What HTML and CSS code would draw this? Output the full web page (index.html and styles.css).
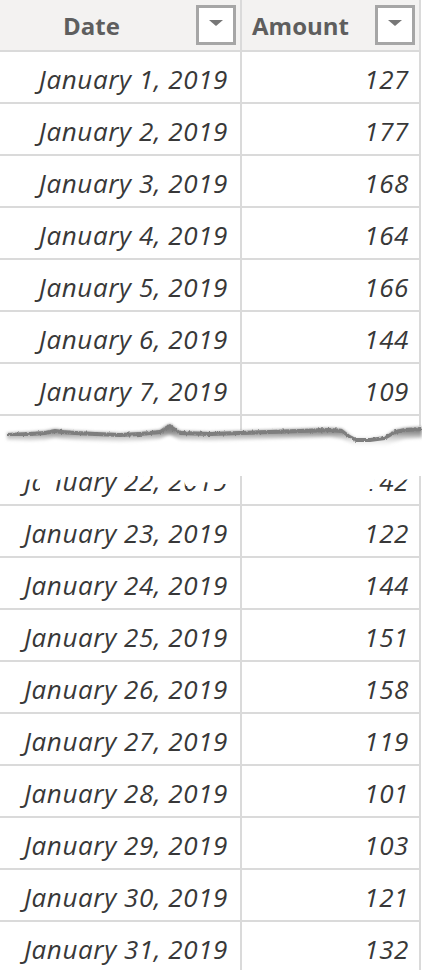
FILE: index.html
```html
<!DOCTYPE html>
<html>
<head>
<meta charset="utf-8">
<link rel="stylesheet" href="styles.css">
</head>
<body>
<div class="table">
  <div class="row head">
    <div class="cell c-date"><span class="htext">Date</span><span class="filter"><svg width="14" height="8" viewBox="0 0 14 8"><path d="M0 1 H14 L7 7 Z" fill="#777"/></svg></span></div>
    <div class="cell c-amt"><span class="htext">Amount</span><span class="filter"><svg width="14" height="8" viewBox="0 0 14 8"><path d="M0 1 H14 L7 7 Z" fill="#777"/></svg></span></div>
  </div>
  <div class="row"><div class="cell c-date">January 1, 2019</div><div class="cell c-amt">127</div></div>
  <div class="row"><div class="cell c-date">January 2, 2019</div><div class="cell c-amt">177</div></div>
  <div class="row"><div class="cell c-date">January 3, 2019</div><div class="cell c-amt">168</div></div>
  <div class="row"><div class="cell c-date">January 4, 2019</div><div class="cell c-amt">164</div></div>
  <div class="row"><div class="cell c-date">January 5, 2019</div><div class="cell c-amt">166</div></div>
  <div class="row"><div class="cell c-date">January 6, 2019</div><div class="cell c-amt">144</div></div>
  <div class="row"><div class="cell c-date">January 7, 2019</div><div class="cell c-amt">109</div></div>
  <div class="gap">
    <div class="cell c-date"></div><div class="cell c-amt"></div>
    <svg class="tear" width="422" height="80" viewBox="0 0 422 80">
      <defs>
        <filter id="rough" x="-2%" y="-50%" width="104%" height="200%">
          <feTurbulence type="fractalNoise" baseFrequency="0.35 0.2" numOctaves="2" seed="4" result="n"/>
          <feDisplacementMap in="SourceGraphic" in2="n" scale="3" xChannelSelector="R" yChannelSelector="G"/>
        </filter>
        <filter id="soft" x="-2%" y="-50%" width="104%" height="300%">
          <feGaussianBlur stdDeviation="1.8"/>
        </filter>
        <linearGradient id="fade" x1="0" y1="0" x2="0" y2="1">
          <stop offset="0" stop-color="#6f6f6f"/>
          <stop offset="0.35" stop-color="#8e8e8e"/>
          <stop offset="1" stop-color="#ffffff" stop-opacity="0"/>
        </linearGradient>
      </defs>
      <!-- white paper below the tear -->
      <path d="M0 16 L7 16 L30 15 L45 14 L55 12 L62 13 L75 14 L95 15 L120 16 L140 15 L160 13 L166 9 L170 7 L174 10 L180 14 L210 15 L240 14 L270 13 L300 12 L330 11 L342 12 L350 18 L356 21 L370 21 L385 19 L395 13 L405 11 L422 10 L422 60 L0 60 Z" fill="#fff"/>
      <!-- erased parts of the clipped row below -->
      <path d="M0 60 H40 V78 H56 V64 H60 V60 Z" fill="#fff"/>
      <path d="M18 60 H40 V64 L34 63 L26 64 L18 63 Z" fill="#fff"/>
      <path d="M170 60 H238 V62 L228 68 L215 68 L200 65 L196 70 L186 70 L184 65 L170 63 Z" fill="#fff"/>
      <path d="M356 60 H417 V62 L408 63 L398 66 L392 65 L386 63 L375 63 L374 73 L362 73 L356 62 Z" fill="#fff"/>
      <!-- shadow under the tear -->
      <path d="M7 17 L30 16 L45 15 L55 13 L62 14 L75 15 L95 16 L120 17 L140 16 L160 14 L166 10 L170 8 L174 11 L180 15 L210 16 L240 15 L270 14 L300 13 L330 12 L342 13 L350 19 L356 22 L370 22 L385 20 L395 14 L405 12 L422 11 L422 22 L405 23 L395 26 L385 31 L370 32 L356 31 L350 27 L342 23 L330 21 L300 22 L270 23 L240 24 L210 25 L180 24 L174 21 L170 19 L166 20 L160 23 L140 25 L120 26 L95 25 L75 24 L62 23 L55 22 L45 24 L30 25 L7 24 Z" fill="url(#fade)" filter="url(#soft)"/>
      <!-- torn edge -->
      <path d="M7 17 L30 16 L45 15 L55 13 L62 14 L75 15 L95 16 L120 17 L140 16 L160 14 L166 10 L170 8 L174 11 L180 15 L210 16 L240 15 L270 14 L300 13 L330 12 L342 13 L350 19 L356 22 L370 22 L385 20 L395 14 L405 12 L422 11 L422 15 L405 16 L395 18 L385 24 L370 26 L356 26 L350 23 L342 17 L330 16 L300 17 L270 18 L240 19 L210 20 L180 19 L174 15 L170 13 L166 14 L160 18 L140 20 L120 21 L95 20 L75 19 L62 18 L55 17 L45 19 L30 20 L7 20 Z" fill="#7e7e7e" filter="url(#rough)"/>
    </svg>
  </div>
  <div class="partial">
    <div class="row"><div class="cell c-date">January 22, 2019</div><div class="cell c-amt">142</div></div>
  </div>
  <div class="row"><div class="cell c-date">January 23, 2019</div><div class="cell c-amt">122</div></div>
  <div class="row"><div class="cell c-date">January 24, 2019</div><div class="cell c-amt">144</div></div>
  <div class="row"><div class="cell c-date">January 25, 2019</div><div class="cell c-amt">151</div></div>
  <div class="row"><div class="cell c-date">January 26, 2019</div><div class="cell c-amt">158</div></div>
  <div class="row"><div class="cell c-date">January 27, 2019</div><div class="cell c-amt">119</div></div>
  <div class="row"><div class="cell c-date">January 28, 2019</div><div class="cell c-amt">101</div></div>
  <div class="row"><div class="cell c-date">January 29, 2019</div><div class="cell c-amt">103</div></div>
  <div class="row"><div class="cell c-date">January 30, 2019</div><div class="cell c-amt">121</div></div>
  <div class="row"><div class="cell c-date">January 31, 2019</div><div class="cell c-amt">132</div></div>
</div>
</body>
</html>
```
FILE: styles.css
```css
html, body {
  margin: 0;
  padding: 0;
  background: #ffffff;
  overflow: hidden;
}
.table {
  width: 421px;
  font-family: "Open Sans", "Noto Sans", sans-serif;
}
.row {
  display: flex;
  height: 52px;
  box-sizing: border-box;
  border-bottom: 2px solid #dadada;
}
.cell {
  box-sizing: border-box;
  height: 100%;
  display: flex;
  align-items: center;
  justify-content: flex-end;
  border-right: 2px solid #dadada;
  font-style: italic;
  font-size: 26px;
  letter-spacing: 0.6px;
  color: #383838;
  padding-top: 4px;
}
.c-date {
  width: 242px;
  padding-right: 12px;
}
.c-amt {
  width: 179px;
  padding-right: 10px;
}
.head {
  background: #f3f2f1;
}
.head .cell {
  justify-content: flex-start;
  font-style: normal;
  font-weight: 700;
  font-size: 24px;
  letter-spacing: 0;
  color: #5e5e5e;
  padding-right: 4px;
  padding-top: 0;
}
.head .c-date {
  padding-left: 63px;
}
.head .c-amt {
  padding-left: 10px;
}
.filter {
  margin-left: auto;
  width: 40px;
  height: 40px;
  box-sizing: border-box;
  border: 3px solid #a6a6a6;
  background: #ffffff;
  display: flex;
  align-items: center;
  justify-content: center;
  padding-bottom: 4px;
}
.gap {
  position: relative;
  display: flex;
  height: 60px;
}
.gap .cell {
  padding: 0;
}
.tear {
  position: absolute;
  left: 0;
  top: 0;
  overflow: visible;
}
.partial {
  height: 30px;
  overflow: hidden;
}
.partial .row {
  margin-top: -22px;
}
```
